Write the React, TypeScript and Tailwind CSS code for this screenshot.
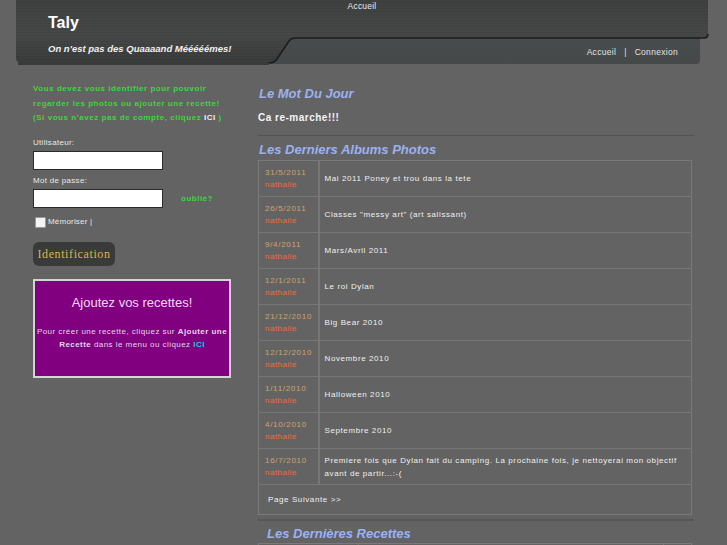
import React from "react";

const albums: { date: string; title: string }[] = [
  { date: "31/5/2011", title: "Mai 2011  Poney et trou dans la tete" },
  { date: "26/5/2011", title: "Classes \"messy art\" (art salissant)" },
  { date: "9/4/2011", title: "Mars/Avril 2011" },
  { date: "12/1/2011", title: "Le roi Dylan" },
  { date: "21/12/2010", title: "Big Bear 2010" },
  { date: "12/12/2010", title: "Novembre 2010" },
  { date: "1/11/2010", title: "Halloween 2010" },
  { date: "4/10/2010", title: "Septembre 2010" },
  {
    date: "16/7/2010",
    title:
      "Premiere fois que Dylan fait du camping. La prochaine fois, je nettoyerai mon objectif avant de partir...:-(",
  },
];

function HeaderShape() {
  return (
    <svg
      className="absolute left-0 top-0"
      width="700"
      height="68"
      viewBox="0 0 700 68"
    >
      <defs>
        <linearGradient id="topg" x1="0" y1="0" x2="0" y2="1">
          <stop offset="0" stopColor="#3f4141" />
          <stop offset="0.55" stopColor="#464848" />
          <stop offset="1" stopColor="#3a3b3b" />
        </linearGradient>
        <linearGradient id="tabg" x1="0" y1="0" x2="0" y2="1">
          <stop offset="0" stopColor="#4a4d4d" />
          <stop offset="1" stopColor="#464949" />
        </linearGradient>
        <pattern id="stripes" width="4" height="3" patternUnits="userSpaceOnUse">
          <rect width="4" height="3" fill="transparent" />
          <rect y="2" width="4" height="1" fill="#000" opacity="0.06" />
        </pattern>
      </defs>
      <rect x="250" y="30" width="434" height="34" rx="4" fill="url(#tabg)" />
      <path
        d="M0,0 H692 V34 Q692,38 688,38 H279 Q275,38 273,41 L261,59 Q258,63 253,63 H5 Q0,63 0,58 Z"
        fill="url(#topg)"
      />
      <path
        d="M0,0 H692 V34 Q692,38 688,38 H279 Q275,38 273,41 L261,59 Q258,63 253,63 H5 Q0,63 0,58 Z"
        fill="url(#stripes)"
      />
      <path
        d="M253,63 Q258,63 261,59 L273,41 Q275,38 279,38 H688 Q692,38 692,34"
        fill="none"
        stroke="#1c1c1c"
        strokeWidth="1.6"
      />
      <path d="M2,64 H253" stroke="#2e2e2e" strokeWidth="1.5" />
    </svg>
  );
}

export default function App() {
  return (
    <div
      className="w-[727px] h-[545px] overflow-hidden bg-[#636363]"
      style={{ fontFamily: '"Liberation Sans", Arial, sans-serif' }}
    >
      {/* Header */}
      <div className="relative ml-[16px] w-[700px] h-[66px]">
        <HeaderShape />
        <div className="relative flex flex-col">
          <div className="w-[692px] text-center text-[8.5px] leading-[10px] pt-[1px] text-[#e8e8e8] tracking-[0.2px]">
            Accueil
          </div>
          <div className="pl-[32px] mt-[2px] text-[16px] leading-[19px] font-bold text-white">
            Taly
          </div>
          <div className="flex items-start">
            <div className="pl-[32px] mt-[11px] text-[9.5px] leading-[12px] font-bold italic text-[#f0f0f0]">
              On n'est pas des Quaaaand Mééééémes!
            </div>
            <div className="ml-auto mr-[38px] mt-[15px] flex gap-[8px] text-[8.5px] leading-[10px] text-[#e2e2e2] tracking-[0.3px]">
              <span>Accueil</span>
              <span>|</span>
              <span>Connexion</span>
            </div>
          </div>
        </div>
      </div>

      {/* Body */}
      <div className="flex">
        {/* Left column */}
        <div className="w-[258px] pl-[33px] pt-[16px] shrink-0">
          <div className="text-[8px] leading-[14.5px] font-bold text-[#3ad83a] tracking-[0.55px]">
            Vous devez vous identifier pour pouvoir
            <br />
            regarder les photos ou ajouter une recette!
            <br />
            (Si vous n'avez pas de compte, cliquez{" "}
            <span className="text-[#f0f0f0]">ICI</span> )
          </div>
          <div className="mt-[12px] text-[8px] leading-[10px] text-[#e8e8e8] tracking-[0.3px]">
            Utilisateur:
          </div>
          <div className="mt-[3px] w-[130px] h-[19px] bg-white border border-[#2a2a2a]" />
          <div className="mt-[6px] text-[8px] leading-[10px] text-[#e8e8e8] tracking-[0.3px]">
            Mot de passe:
          </div>
          <div className="flex items-center">
            <div className="mt-[3px] w-[130px] h-[19px] bg-white border border-[#2a2a2a]" />
            <div className="ml-[18px] mt-[4px] text-[8px] font-bold text-[#3ad83a] tracking-[0.5px]">
              oublié?
            </div>
          </div>
          <div className="mt-[9px] ml-[2px] flex items-center gap-[2px]">
            <div className="w-[11px] h-[11px] bg-[#f4f4f4] border border-[#9a9a9a] rounded-[1px]" />
            <span className="text-[8px] leading-[10px] text-[#e8e8e8] tracking-[0.2px]">Mémoriser |</span>
          </div>
          <div
            className="mt-[14px] w-[82px] h-[24px] rounded-[6px] bg-[#393a3a] flex items-center justify-center text-[12px] text-[#d9b452] tracking-[0.6px]"
            style={{ fontFamily: '"Liberation Serif", "Times New Roman", serif' }}
          >
            Identification
          </div>
          <div className="mt-[13px] w-[198px] h-[99px] border-2 border-[#d4d4d4] bg-[#800080] flex flex-col items-center">
            <div className="mt-[14px] text-[13px] leading-[16px] text-[#f0dcef]">
              Ajoutez vos recettes!
            </div>
            <div className="mt-[14px] text-center text-[8px] leading-[13.5px] text-[#e6d4e6] tracking-[0.45px] whitespace-nowrap">
              Pour créer une recette, cliquez sur{" "}
              <span className="font-bold">Ajouter une</span>
              <br />
              <span className="font-bold">Recette</span> dans le menu ou cliquez{" "}
              <span className="font-bold text-[#22c8e8]">ICI</span>
            </div>
          </div>
        </div>

        {/* Right column */}
        <div className="w-[436px] pt-[19px] shrink-0">
          <div className="pl-[1px] text-[13px] leading-[17px] font-bold italic text-[#9cb2f0]">
            Le Mot Du Jour
          </div>
          <div className="mt-[10px] text-[10px] leading-[12px] font-bold text-[#f4f4f4] tracking-[0.5px]">
            Ca re-marche!!!
          </div>
          <div className="mt-[11px] border-t border-[#525252]" />
          <div className="mt-[5px] pl-[1px] text-[13px] leading-[17px] font-bold italic text-[#9cb2f0]">
            Les Derniers Albums Photos
          </div>
          <table className="mt-[2px] w-[434px] border-collapse border border-[#7a7a7a]">
            <tbody>
              {albums.map((a) => (
                <tr key={a.date} className="h-[36px] border-b border-[#777]">
                  <td className="w-[60px] pl-[6px] align-middle border-r-2 border-[#777]">
                    <div className="text-[8px] leading-[12px] text-[#d2a46c] tracking-[0.7px]">
                      {a.date}
                    </div>
                    <div className="text-[8px] leading-[12px] text-[#ec6e3c] tracking-[0.5px]">
                      nathalie
                    </div>
                  </td>
                  <td className="pl-[5px] pr-[4px] align-middle text-[8px] leading-[13px] text-[#f0f0f0] tracking-[0.6px]">
                    {a.title}
                  </td>
                </tr>
              ))}
              <tr className="h-[30px]">
                <td colSpan={2} className="pl-[9px] align-middle text-[8px] text-[#f0f0f0] tracking-[0.6px]">
                  Page Suivante &gt;&gt;
                </td>
              </tr>
            </tbody>
          </table>
          <div className="mt-[4px] w-[436px] border-t-2 border-[#575757]" />
          <div className="mt-[4px] pl-[9px] text-[13px] leading-[17px] font-bold italic text-[#9cb2f0]">
            Les Dernières Recettes
          </div>
          <div className="mt-[1px] w-[434px] h-[20px] border border-[#7a7a7a] flex">
            <div className="w-[100px] border-r border-[#777]" />
            <div className="w-[305px] border-r border-[#777]" />
          </div>
        </div>
      </div>
    </div>
  );
}
